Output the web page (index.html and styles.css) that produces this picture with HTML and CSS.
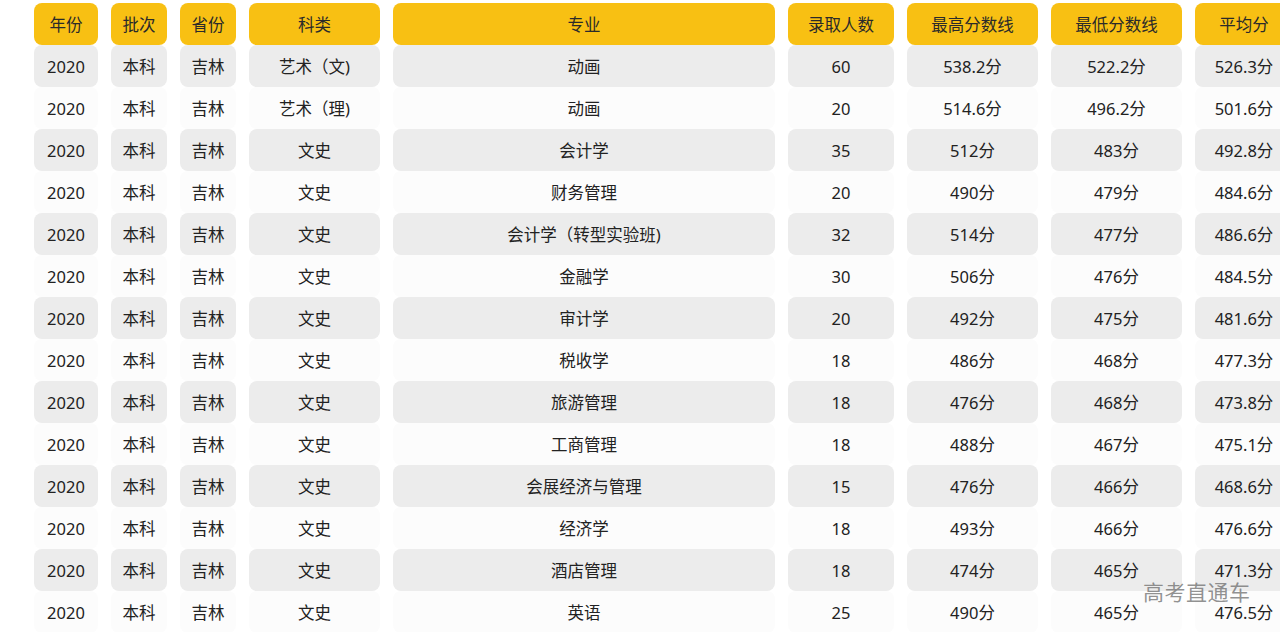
FILE: index.html
```html
<!DOCTYPE html>
<html lang="zh-CN">
<head>
<meta charset="utf-8">
<title>录取分数线</title>
<link rel="stylesheet" href="styles.css">
</head>
<body>
<div class="page">
<table class="scores">
<colgroup>
<col class="c-year"><col class="c-batch"><col class="c-prov"><col class="c-type"><col class="c-major"><col class="c-num"><col class="c-max"><col class="c-min"><col class="c-avg">
</colgroup>
<thead>
<tr><th>年份</th><th>批次</th><th>省份</th><th>科类</th><th>专业</th><th>录取人数</th><th>最高分数线</th><th>最低分数线</th><th>平均分</th></tr>
</thead>
<tbody>
<tr><td>2020</td><td>本科</td><td>吉林</td><td>艺术（文)</td><td>动画</td><td>60</td><td>538.2分</td><td>522.2分</td><td>526.3分</td></tr>
<tr><td>2020</td><td>本科</td><td>吉林</td><td>艺术（理)</td><td>动画</td><td>20</td><td>514.6分</td><td>496.2分</td><td>501.6分</td></tr>
<tr><td>2020</td><td>本科</td><td>吉林</td><td>文史</td><td>会计学</td><td>35</td><td>512分</td><td>483分</td><td>492.8分</td></tr>
<tr><td>2020</td><td>本科</td><td>吉林</td><td>文史</td><td>财务管理</td><td>20</td><td>490分</td><td>479分</td><td>484.6分</td></tr>
<tr><td>2020</td><td>本科</td><td>吉林</td><td>文史</td><td>会计学（转型实验班)</td><td>32</td><td>514分</td><td>477分</td><td>486.6分</td></tr>
<tr><td>2020</td><td>本科</td><td>吉林</td><td>文史</td><td>金融学</td><td>30</td><td>506分</td><td>476分</td><td>484.5分</td></tr>
<tr><td>2020</td><td>本科</td><td>吉林</td><td>文史</td><td>审计学</td><td>20</td><td>492分</td><td>475分</td><td>481.6分</td></tr>
<tr><td>2020</td><td>本科</td><td>吉林</td><td>文史</td><td>税收学</td><td>18</td><td>486分</td><td>468分</td><td>477.3分</td></tr>
<tr><td>2020</td><td>本科</td><td>吉林</td><td>文史</td><td>旅游管理</td><td>18</td><td>476分</td><td>468分</td><td>473.8分</td></tr>
<tr><td>2020</td><td>本科</td><td>吉林</td><td>文史</td><td>工商管理</td><td>18</td><td>488分</td><td>467分</td><td>475.1分</td></tr>
<tr><td>2020</td><td>本科</td><td>吉林</td><td>文史</td><td>会展经济与管理</td><td>15</td><td>476分</td><td>466分</td><td>468.6分</td></tr>
<tr><td>2020</td><td>本科</td><td>吉林</td><td>文史</td><td>经济学</td><td>18</td><td>493分</td><td>466分</td><td>476.6分</td></tr>
<tr><td>2020</td><td>本科</td><td>吉林</td><td>文史</td><td>酒店管理</td><td>18</td><td>474分</td><td>465分</td><td>471.3分</td></tr>
<tr><td>2020</td><td>本科</td><td>吉林</td><td>文史</td><td>英语</td><td>25</td><td>490分</td><td>465分</td><td>476.5分</td></tr>
</tbody>
</table>
<div class="watermark">高考直通车</div>
</div>
</body>
</html>
```
FILE: styles.css
```css
html, body {
  margin: 0;
  padding: 0;
  background: #ffffff;
  overflow: hidden;
}
.page {
  position: relative;
  width: 1280px;
  height: 632px;
  overflow: hidden;
  font-family: "Noto Sans", "Noto Sans CJK SC", sans-serif;
  font-size: 16.5px;
  color: #222222;
}
.scores {
  margin: 3px 0 0 21px;
  border-collapse: separate;
  border-spacing: 13px 0;
  table-layout: fixed;
  width: 1285px;
  min-width: 1285px;
}
.c-year { width: 64px; }
.c-batch { width: 56px; }
.c-prov { width: 56px; }
.c-type { width: 131px; }
.c-major { width: 382px; }
.c-num { width: 106px; }
.c-max { width: 131px; }
.c-min { width: 131px; }
.c-avg { width: 98px; }
.scores th,
.scores td {
  height: 40px;
  padding: 2px 0 0;
  text-align: center;
  vertical-align: middle;
  border-radius: 8px;
  white-space: nowrap;
  line-height: 20px;
}
.scores th {
  background: #f8c013;
  font-weight: normal;
  color: #2a2a2a;
}
.scores tbody tr:nth-child(odd) td {
  background: #ececec;
}
.scores tbody tr:nth-child(even) td {
  background: #fcfcfc;
}
.watermark {
  position: absolute;
  left: 1143px;
  top: 578px;
  font-family: "Noto Sans CJK SC", sans-serif;
  font-size: 21px;
  line-height: 26px;
  color: rgba(110, 110, 110, 0.75);
  letter-spacing: 0.5px;
}
```
